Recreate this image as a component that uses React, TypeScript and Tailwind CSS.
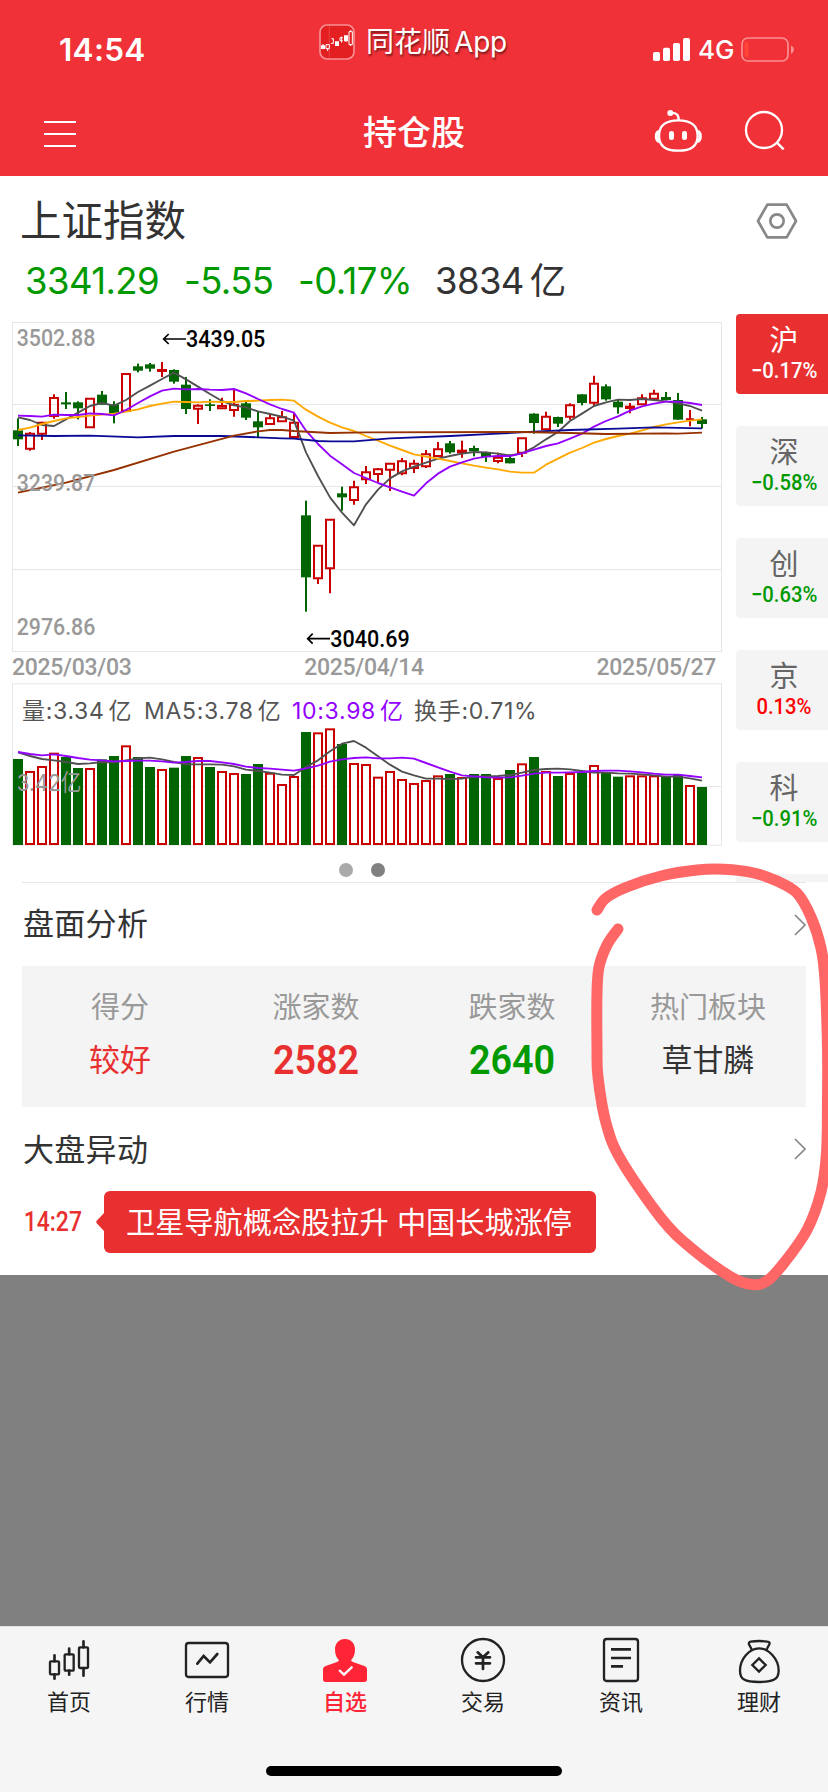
import type { ReactNode } from "react";
import clsx from "clsx";

type Candle = [kind: "up" | "down", high: number, top: number, bottom: number, low: number];

// chart geometry is kept in thirds of a pixel
const STEP = 36;
const FIRST = 54;
const xAt = (i: number) => FIRST + i * STEP;

const GREEN = "#006400";
const RED = "#c80000";

const candles: Candle[] = [
  ["down", 325, 361, 388, 408],
  ["up", 366, 371, 416, 422],
  ["up", 335, 338, 371, 390],
  ["up", 253, 264, 318, 326],
  ["down", 246, 277, 283, 297],
  ["down", 274, 277, 295, 328],
  ["up", 266, 266, 352, 352],
  ["down", 243, 254, 284, 284],
  ["down", 274, 283, 311, 340],
  ["up", 190, 192, 302, 302],
  ["down", 161, 169, 182, 187],
  ["down", 159, 163, 176, 185],
  ["up", 156, 180, 183, 201],
  ["down", 178, 180, 215, 221],
  ["down", 201, 224, 297, 312],
  ["up", 283, 287, 296, 342],
  ["down", 268, 283, 288, 303],
  ["up", 263, 288, 295, 295],
  ["up", 240, 284, 300, 320],
  ["down", 276, 280, 323, 330],
  ["down", 306, 334, 352, 381],
  ["up", 312, 325, 342, 345],
  ["up", 303, 322, 334, 336],
  ["up", 308, 338, 381, 381],
  ["down", 572, 616, 802, 905],
  ["up", 705, 707, 805, 822],
  ["up", 628, 629, 775, 850],
  ["down", 530, 550, 562, 602],
  ["up", 512, 532, 570, 584],
  ["up", 468, 487, 508, 522],
  ["up", 474, 478, 492, 516],
  ["up", 461, 461, 479, 543],
  ["up", 444, 454, 490, 496],
  ["up", 449, 461, 474, 489],
  ["up", 420, 433, 469, 474],
  ["up", 396, 418, 438, 440],
  ["down", 393, 400, 427, 431],
  ["up", 392, 422, 427, 443],
  ["down", 407, 414, 424, 439],
  ["down", 425, 428, 441, 456],
  ["up", 428, 443, 453, 460],
  ["down", 433, 444, 460, 460],
  ["up", 385, 385, 428, 441],
  ["down", 310, 311, 339, 371],
  ["up", 305, 320, 358, 358],
  ["down", 320, 321, 341, 351],
  ["up", 280, 286, 320, 329],
  ["down", 253, 253, 279, 286],
  ["up", 197, 221, 278, 287],
  ["down", 223, 229, 268, 272],
  ["down", 268, 275, 292, 311],
  ["up", 279, 290, 294, 310],
  ["up", 253, 265, 283, 285],
  ["up", 239, 251, 266, 270],
  ["down", 246, 261, 270, 271],
  ["down", 249, 270, 329, 329],
  ["up", 300, 328, 328, 349],
  ["down", 321, 328, 342, 355],
];

const ma5 = [
  322, 330, 345, 348, 328, 308, 288, 279, 287, 270, 246, 227, 207, 188, 208, 230, 252, 273, 286,
  292, 304, 312, 320, 332, 427, 498, 562, 608, 646, 583, 539, 505, 484, 470, 458, 446, 438, 431,
  426, 427, 431, 436, 430, 412, 388, 366, 333, 311, 288, 277, 269, 270, 267, 270, 274, 280, 288, 302,
];
const ma10 = [
  317, 318, 320, 314, 315, 315, 310, 312, 316, 300, 279, 259, 242, 236, 238, 237, 239, 240, 237,
  250, 267, 283, 297, 308, 362, 402, 437, 463, 489, 504, 519, 532, 545, 557, 520, 491, 470, 457,
  446, 440, 438, 438, 430, 419, 408, 400, 386, 371, 350, 333, 319, 302, 289, 281, 275, 275, 279, 285,
];
const ma20 = [
  360, 353, 342, 333, 325, 321, 317, 314, 311, 305, 298, 288, 281, 275, 276, 277, 275, 276, 276,
  273, 272, 270, 269, 272, 299, 320, 338, 352, 363, 378, 392, 407, 420, 433, 440, 446, 453, 460,
  467, 473, 478, 485, 488, 488, 464, 446, 428, 414, 398, 387, 378, 371, 361, 351, 343, 337, 332, 328,
];
const ma60: [number, number][] = [
  [0, 376], [3, 378], [6, 377], [10, 382], [13, 378], [17, 378], [20, 382], [22, 385], [23, 386],
  [25, 393], [26, 394], [28, 394], [31, 385], [36, 378], [40, 371], [43, 365], [46, 360], [50, 356],
  [53, 352], [57, 355],
];
const ma120: [number, number][] = [
  [0, 548], [4, 518], [8, 480], [13, 425], [18, 377], [20, 364], [21, 360], [22, 360], [23, 363],
  [26, 369], [29, 367], [42, 366], [46, 369], [49, 372], [54, 370], [55, 371], [57, 368],
];

const volumes = [
  297, 333, 318, 278, 291, 324, 324, 298, 288, 256, 291, 321, 327, 323, 288, 291, 321, 333, 339,
  342, 312, 338, 372, 348, 216, 217, 205, 252, 309, 312, 350, 333, 357, 369, 360, 346, 342, 351,
  342, 342, 354, 330, 310, 291, 333, 348, 339, 337, 315, 338, 350, 346, 346, 346, 348, 345, 375, 381,
];
const vol5 = [
  277, 288, 297, 301, 306, 312, 310, 306, 307, 301, 295, 293, 298, 306, 313, 313, 313, 314, 319,
  329, 333, 338, 344, 345, 321, 301, 274, 251, 243, 263, 289, 314, 335, 346, 356, 356, 357, 356,
  350, 349, 348, 345, 338, 330, 327, 326, 328, 333, 338, 338, 340, 341, 343, 346, 350, 350, 355, 362,
];
const vol10 = [
  276, 282, 286, 283, 288, 294, 299, 301, 304, 303, 302, 302, 304, 308, 306, 303, 303, 307, 312,
  320, 324, 326, 329, 332, 325, 317, 305, 298, 294, 292, 295, 295, 293, 296, 309, 322, 335, 346,
  349, 352, 353, 352, 347, 341, 338, 338, 337, 336, 333, 332, 332, 334, 337, 341, 344, 344, 348, 352,
];

const series = (ys: number[]) => ys.map((y, i) => `${xAt(i)},${y}`).join(" ");
const sparse = (pts: [number, number][]) => pts.map(([i, y]) => `${xAt(i)},${y}`).join(" ");

// Catmull-Rom through all points
function smooth(p: number[][]) {
  let d = `M${p[0][0]} ${p[0][1]}`;
  for (let i = 0; i < p.length - 1; i++) {
    const a = p[i - 1] ?? p[i];
    const b = p[i];
    const c = p[i + 1];
    const e = p[i + 2] ?? c;
    d += `C${b[0] + (c[0] - a[0]) / 6} ${b[1] + (c[1] - a[1]) / 6} ${c[0] - (e[0] - b[0]) / 6} ${c[1] - (e[1] - b[1]) / 6} ${c[0]} ${c[1]}`;
  }
  return d;
}

const markerPoints = [
  [597, 910], [606, 898], [627, 887], [661, 876], [697, 870], [724, 869.3], [754, 873], [777, 881],
  [797, 893], [811, 917], [821, 948], [825, 980], [827.5, 1047], [827.5, 1100], [826.5, 1153],
  [821, 1192], [807, 1230], [784, 1263], [767, 1281], [752, 1284.5], [731, 1277], [691, 1248],
  [661, 1218], [621, 1160], [606, 1123], [598, 1077], [597, 1047], [597, 993], [599, 967],
  [607, 945], [618, 929],
];

function StatusBar() {
  return (
    <div className="flex h-[88px] items-start text-white">
      <span className="mt-[31px] ml-[59px] w-[260px] text-[31.5px] leading-[38px] font-semibold tracking-[0.3px]">
        14:54
      </span>
      <div className="mt-6 flex w-[334px] items-center">
        <svg viewBox="0 0 108 108" className="size-9">
          <rect x="3" y="3" width="102" height="102" rx="21" fill="#e31f22" stroke="#f79093" strokeWidth="5" />
          <path d="M31 6V102" stroke="#ee5053" strokeWidth="2" />
          <path d="M6 64H18V75H6ZM48 52H60V66H48ZM75 34H87V52H75Z" fill="#fff" />
          <path
            d="M12 60V66M21 62H31V74H21ZM26 74V81M38 44H43V58H36M40 42V46M63 41H71M63 41V50H71M68 38V56M81 48V54M90 23H100V62H90ZM95 18V23M95 62V66"
            fill="none"
            stroke="#fff"
            strokeWidth="3"
          />
        </svg>
        <span className="ml-[11px] text-[28px] leading-9 whitespace-nowrap [text-shadow:1px_2px_2px_rgba(0,0,0,0.5)]">
          同花顺<span className="ml-1 tracking-[-0.2px]">App</span>
        </span>
      </div>
      <svg viewBox="0 0 37 23" className="mt-[38px] h-[23px] w-[37px]" fill="#fff">
        <rect x="0" y="14" width="7" height="9" rx="1.8" />
        <rect x="10" y="9.7" width="7" height="13.3" rx="1.8" />
        <rect x="20" y="5" width="7" height="18" rx="1.8" />
        <rect x="30" y="0" width="7" height="23" rx="1.8" />
      </svg>
      <span className="mt-[34px] ml-2 w-[43px] text-[26px] leading-8 font-medium">4G</span>
      <svg viewBox="0 0 54 26" className="mt-[37px] h-[26px] w-[54px]">
        <rect x="1" y="1" width="46" height="23" rx="6" fill="none" stroke="#f79093" strokeWidth="1.7" />
        <rect x="3.5" y="5" width="4" height="15" rx="1.5" fill="#ff4438" />
        <path d="M50 8.5Q53 10 53 12.5T50 17Z" fill="#f79093" />
      </svg>
    </div>
  );
}

function NavBar() {
  return (
    <div className="flex h-[88px] items-start text-white">
      <div className="mt-[33px] ml-11 flex w-8 flex-col gap-[10px]">
        <i className="h-[2px] bg-white" />
        <i className="h-[2px] bg-white" />
        <i className="h-[2px] bg-white" />
      </div>
      <h1 className="mt-[21px] ml-[287px] w-[291px] text-[34px] leading-[48px] font-medium">持仓股</h1>
      <svg viewBox="0 0 144 132" className="mt-[21px] h-11 w-12" fill="none" stroke="#fff" strokeWidth="7">
        <path d="M73 34C110 34 131 50 131 80C131 111 112 125 73 125C34 125 15 111 15 80C15 50 36 34 73 34Z" />
        <path d="M15 67C4 70 4 94 16 98M131 67C142 70 142 94 130 98" strokeWidth="9" />
        <path d="M50 12C66 10 75 18 74 34" />
        <circle cx="49" cy="12" r="9" fill="#fff" stroke="none" />
        <rect x="45" y="66" width="15" height="27" rx="7" fill="#fff" stroke="none" />
        <rect x="84" y="66" width="15" height="27" rx="7" fill="#fff" stroke="none" />
      </svg>
      <svg viewBox="0 0 126 126" className="mt-[21px] ml-[41px] size-[42px]" fill="none" stroke="#fff" strokeWidth="7">
        <circle cx="63" cy="63" r="54" />
        <path d="M101 100L122 121" />
      </svg>
    </div>
  );
}

function Label({ x, y, w, fill = "#999", size = 69, weight = 400, children }: {
  x: number; y: number; w: number; fill?: string; size?: number; weight?: number; children: ReactNode;
}) {
  return (
    <text x={x} y={y} textLength={w} lengthAdjust="spacingAndGlyphs" fill={fill} fontSize={size} fontWeight={weight}>
      {children}
    </text>
  );
}

function KLineChart() {
  return (
    <svg viewBox="36 36 2130 990" className="block h-[330px] w-[710px] font-[Roboto]">
      <g stroke="#e6e6e6" strokeWidth="3" fill="none">
        <rect x="37.5" y="37.5" width="2127" height="987" />
        <path d="M37 283.5H2164M37 529.5H2164M37 778.5H2164" />
      </g>
      {candles.map(([kind, high, top, bottom, low], i) => {
        const x = xAt(i);
        return kind === "down" ? (
          <g key={i} fill={GREEN}>
            <rect x={x - 3} y={high} width="6" height={low - high} />
            <rect x={x - 15} y={top} width="30" height={bottom - top} />
          </g>
        ) : (
          <g key={i} stroke={RED} strokeWidth="6" fill="none">
            <path d={`M${x} ${high}V${top}M${x} ${bottom}V${low}`} />
            <path d={`M${x - 12} ${top}H${x + 12}V${bottom}H${x - 12}Z`} />
          </g>
        );
      })}
      <g fill="none" strokeWidth="5.6" strokeLinejoin="round">
        <polyline points={series(ma5)} stroke="#505050" />
        <polyline points={series(ma20)} stroke="#ffa800" />
        <polyline points={series(ma10)} stroke="#9400ff" />
        <polyline points={sparse(ma60)} stroke="#0a0a96" />
        <polyline points={sparse(ma120)} stroke="#963200" />
      </g>
      <Label x={50} y={107} w={236} weight={500}>3502.88</Label>
      <Label x={50} y={542} w={236} weight={500}>3239.87</Label>
      <Label x={50} y={976} w={236} weight={500}>2976.86</Label>
      <path d="M558 87H492M506 72L491 87L506 102" stroke="#000" strokeWidth="5" fill="none" />
      <Label x={558} y={111} w={238} fill="#000" weight={500}>3439.05</Label>
      <path d="M990 986H924M938 971L923 986L938 1001" stroke="#000" strokeWidth="5" fill="none" />
      <Label x={991} y={1011} w={238} fill="#000" weight={500}>3040.69</Label>
    </svg>
  );
}

function VolumeChart() {
  return (
    <div className="relative">
      <svg viewBox="36 69 2130 489" className="block h-[163px] w-[710px]">
        <g stroke="#e6e6e6" strokeWidth="3" fill="none">
          <rect x="37.5" y="71.5" width="2127" height="484" />
          <path d="M37 379.5H2164" />
        </g>
        {volumes.map((top, i) =>
          candles[i][0] === "up" ? (
            <rect key={i} x={xAt(i) - 12} y={top + 3} width="24" height={549 - top} fill="#fff" stroke={RED} strokeWidth="6" />
          ) : (
            <rect key={i} x={xAt(i) - 15} y={top} width="30" height={555 - top} fill={GREEN} />
          ),
        )}
        <g fill="none" strokeWidth="5.6" strokeLinejoin="round">
          <polyline points={series(vol5)} stroke="#505050" />
          <polyline points={series(vol10)} stroke="#9400ff" />
        </g>
        <Label x={50} y={392} w={194} size={70}>3.42亿</Label>
      </svg>
      <div className="absolute top-3 left-[10px] flex text-[23px] leading-8 tracking-[0.7px] whitespace-nowrap text-[#555]">
        <span className="w-[122px]">量:3.34<span className="ml-1">亿</span></span>
        <span className="w-[148px]">MA5:3.78<span className="ml-1">亿</span></span>
        <span className="w-[122px] text-[#9400ff]">10:3.98<span className="ml-1">亿</span></span>
        <span>换手:0.71%</span>
      </div>
    </div>
  );
}

const markets = [
  { name: "沪", change: "−0.17%", active: true },
  { name: "深", change: "−0.58%" },
  { name: "创", change: "−0.63%" },
  { name: "京", change: "0.13%", up: true },
  { name: "科", change: "−0.91%" },
  { name: "", change: "" },
];

function MarketTabs() {
  return (
    <div className="ml-[14px] flex w-[92px] flex-col gap-8">
      {markets.map((m, i) => (
        <div
          key={i}
          className={clsx(
            "flex h-20 shrink-0 flex-col items-center rounded-l-[4px] pl-1",
            m.active ? "bg-[#e93030] text-white" : "bg-[#f4f4f4] text-[#666]",
          )}
        >
          <span className="mt-[9px] text-[29px] leading-[36px]">{m.name}</span>
          <span
            className={clsx(
              "origin-center scale-x-[0.92] font-[Roboto] text-[22px] leading-[23px] font-medium",
              !m.active && (m.up ? "text-[#ff0000]" : "text-[#009900]"),
            )}
          >
            {m.change}
          </span>
        </div>
      ))}
    </div>
  );
}

function Chevron() {
  return (
    <svg viewBox="0 0 12 22" className="h-[22px] w-3" fill="none" stroke="#888" strokeWidth="1.7">
      <path d="M1 1L11 11L1 21" />
    </svg>
  );
}

const stats = [
  { label: "得分", value: "较好", style: "text-[31px] text-[#e93030]" },
  { label: "涨家数", value: "2582", style: "font-[Roboto] text-[41px] font-semibold scale-x-[0.92] text-[#e93030]" },
  { label: "跌家数", value: "2640", style: "font-[Roboto] text-[41px] font-semibold scale-x-[0.92] text-[#009900]" },
  { label: "热门板块", value: "草甘膦", style: "text-[31px] text-[#333]" },
];

const tabs: { label: string; icon: ReactNode; active?: boolean }[] = [
  {
    label: "首页",
    icon: (
      <>
        <rect x="15" y="76" width="27" height="39" rx="3" />
        <rect x="59" y="55" width="27" height="49" rx="3" />
        <rect x="102" y="34" width="27" height="62" rx="3" />
        <path d="M28.5 58V76M28.5 115V128M72.5 38V55M72.5 104V116M115.5 16V34M115.5 96V119" strokeWidth="8" />
      </>
    ),
  },
  {
    label: "行情",
    icon: (
      <>
        <rect x="9" y="21" width="126" height="102" rx="8" />
        <path d="M43 83L62 60L81 79L103 54" strokeWidth="8" />
      </>
    ),
  },
  {
    label: "自选",
    active: true,
    icon: (
      <>
        <path
          d="M72 9C90 9 102 22 102 40C102 56 97 66 90 73Q91 76 96 78L132 91Q138 94 138 100V130Q138 138 130 138H14Q6 138 6 130V100Q6 94 12 91L48 78Q53 76 54 73C47 66 42 56 42 40C42 22 54 9 72 9Z"
          fill="#ff2436"
          stroke="none"
        />
        <path d="M56 104L69 116L92 94" stroke="#fff" />
      </>
    ),
  },
  {
    label: "交易",
    icon: (
      <>
        <circle cx="72" cy="72" r="63" />
        <path d="M56 49L72 64L88 49M51 64H93M51 82H93M72 64V99" strokeWidth="8" />
      </>
    ),
  },
  {
    label: "资讯",
    icon: (
      <>
        <rect x="21" y="9" width="102" height="126" rx="8" />
        <path d="M42 40H102M42 66H102M42 91H78" strokeWidth="8" strokeLinecap="butt" />
      </>
    ),
  },
  {
    label: "理财",
    icon: (
      <>
        <path d="M51 42L42 25Q40 18 47 17Q72 13 97 17Q106 18 103 25L94 42" />
        <path d="M72 37C100 37 131 68 131 104C131 130 115 138 72 138C29 138 15 130 15 104C15 68 44 37 72 37Z" />
        <path d="M72 67L92 87L72 107L52 87Z" />
      </>
    ),
  },
];

export default function App() {
  return (
    <div className="relative flex h-[1792px] w-[828px] flex-col overflow-hidden bg-white font-[Inter,'Noto_Sans_CJK_SC',sans-serif]">
      <header className="h-[176px] bg-[#f03138]">
        <StatusBar />
        <NavBar />
      </header>

      <section className="flex h-[138px] flex-col">
        <div className="mt-[15px] flex h-[60px] items-center justify-between pr-[30px] pl-5">
          <h2 className="text-[41.5px] leading-[60px] text-[#333]">上证指数</h2>
          <svg viewBox="0 0 126 114" className="h-[38px] w-[42px]" fill="none" stroke="#888" strokeWidth="8">
            <path d="M6 57L34 8H92L120 57L92 106H34Z" strokeLinejoin="round" />
            <circle cx="63" cy="57" r="20" />
          </svg>
        </div>
        <div className="flex h-[60px] items-center pl-[25px] text-[36.5px] tracking-[-0.6px] whitespace-nowrap text-[#009900]">
          <span className="w-[159px]">3341.29</span>
          <span className="w-[114px]">-5.55</span>
          <span className="w-[137px]">-0.17%</span>
          <span className="text-[#333]">3834<span className="ml-[6px]">亿</span></span>
        </div>
      </section>

      <section className="flex h-[568px] overflow-hidden">
        <div className="ml-3 w-[710px] pt-2">
          <KLineChart />
          <div className="flex h-[31px] justify-between pr-[6px] font-[Roboto] text-[23px] leading-[31px] font-medium tracking-[-0.3px] text-[#999]">
            <span>2025/03/03</span>
            <span>2025/04/14</span>
            <span>2025/05/27</span>
          </div>
          <VolumeChart />
          <div className="mt-[17px] flex justify-center gap-[18px] pr-[10px]">
            <i className="size-[14px] rounded-full bg-[#aaa]" />
            <i className="size-[14px] rounded-full bg-[#808080]" />
          </div>
        </div>
        <MarketTabs />
      </section>

      <section className="mx-[22px] h-[393px] border-t border-[#e8e8e8]">
        <div className="flex h-[83px] items-center justify-between text-[31px] tracking-[0.3px] text-[#333]">
          <h3 className="pl-px">盘面分析</h3>
          <Chevron />
        </div>
        <div className="grid h-[141px] grid-cols-4 bg-[#f4f4f4] text-center">
          {stats.map((s) => (
            <div key={s.label} className="flex flex-col pt-[20px]">
              <span className="text-[29px] leading-[44px] text-[#999]">{s.label}</span>
              <span className={clsx("mt-[5px] leading-[50px]", s.style)}>{s.value}</span>
            </div>
          ))}
        </div>
        <div className="flex h-[84px] items-center justify-between text-[31px] tracking-[0.3px] text-[#333]">
          <h3 className="pt-[2px] pl-px">大盘异动</h3>
          <Chevron />
        </div>
        <div className="flex h-[62px] items-center">
          <time className="w-[74px] origin-left scale-x-[0.85] pl-[2px] font-[Roboto] text-[27px] font-medium text-[#e93030]">
            14:27
          </time>
          <svg viewBox="0 0 8 18" className="h-[18px] w-2" fill="#e93030">
            <path d="M8 0V18L0.5 10Q0 9 0.5 8Z" />
          </svg>
          <p className="h-[62px] w-[492px] rounded-[6px] bg-[#e93030] pl-[22px] text-[29.2px] leading-[63px] whitespace-nowrap text-white">
            卫星导航概念股拉升 中国长城涨停
          </p>
        </div>
      </section>

      <div className="h-[351px] bg-[#808080]" />

      <footer className="flex h-[166px] flex-col items-center border-t border-[#e0e0e0] bg-[#f5f5f5]">
        <nav className="grid w-full grid-cols-6">
          {tabs.map((t) => (
            <div key={t.label} className="flex flex-col items-center pt-[9px]">
              <svg viewBox="0 0 144 144" className="size-12" fill="none" stroke="#222" strokeWidth="7" strokeLinecap="round">
                {t.icon}
              </svg>
              <span
                className={clsx("text-[22px] leading-[36px]", t.active ? "font-medium text-[#ff2436]" : "text-[#222]")}
              >
                {t.label}
              </span>
            </div>
          ))}
        </nav>
        <div className="mt-[46px] h-[10px] w-[296px] rounded-full bg-black" />
      </footer>

      {/* hand-drawn marker */}
      <svg viewBox="0 0 828 1792" className="pointer-events-none absolute inset-0 h-full w-full">
        <path d={smooth(markerPoints)} fill="none" stroke="#ff6767" strokeWidth="11" strokeLinecap="round" />
      </svg>
    </div>
  );
}
